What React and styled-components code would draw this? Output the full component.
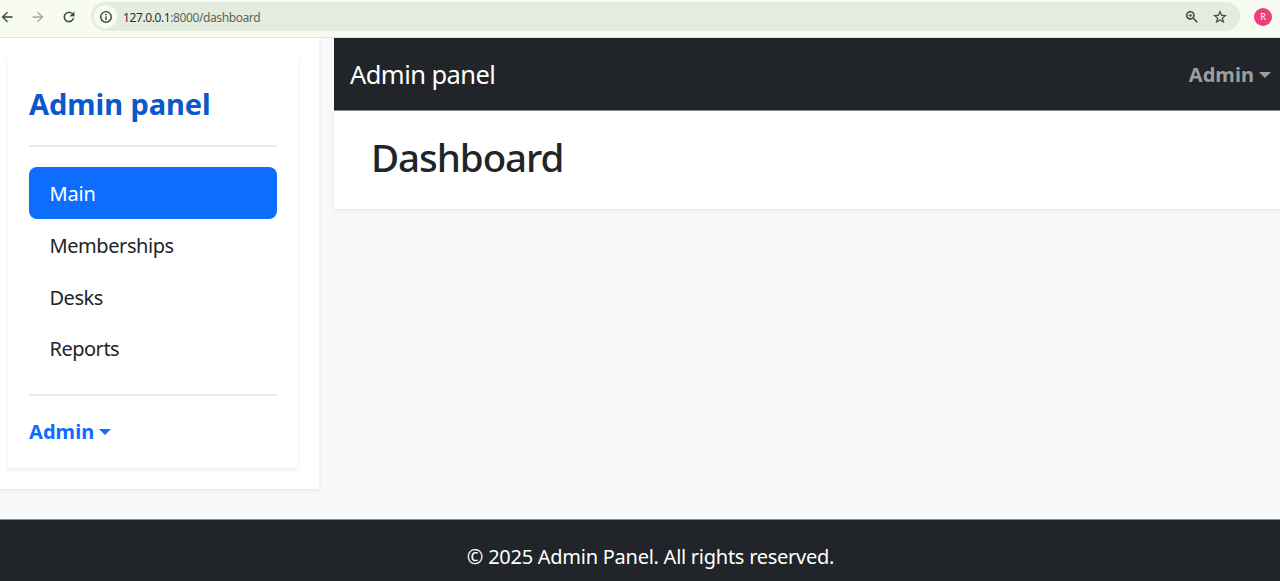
import React from "react";
import styled, { createGlobalStyle } from "styled-components";
import { MdArrowBack, MdArrowForward, MdRefresh, MdInfoOutline, MdZoomIn, MdStarBorder } from "react-icons/md";

const GlobalStyle = createGlobalStyle`
  * { box-sizing: border-box; }
  html, body { margin: 0; overflow: hidden; }
  body {
    background: #f8f9fb;
    color: #212529;
    font-family: "Segoe UI", "Noto Sans", "Open Sans", sans-serif;
  }
`;

const Page = styled.div`
  width: 1280px;
  height: 581px;
  display: flex;
  flex-direction: column;
  overflow: hidden;
`;

const BrowserBar = styled.header`
  flex: none;
  height: 38px;
  display: flex;
  align-items: center;
  padding: 0 8px 4px 0;
  background: #f8fbf2;
  border-bottom: 1px solid #dfe6da;
  svg path[fill="none"] { stroke: none; }
`;

const BrowserControls = styled.div`
  display: flex;
  gap: 15px;
  width: 91px;
  margin-left: -1.5px;
  color: #3f4a3f;
  svg { flex: none; width: 16px; height: 16px; stroke: currentColor; stroke-width: 0.3px; }
  svg:nth-child(2) { color: #a5aca2; }
`;

const AddressBar = styled.div`
  flex: 1;
  height: 29px;
  margin-left: 1.5px;
  border-radius: 15px;
  background: #e3ecdf;
  display: flex;
  align-items: center;
  padding: 0 12px 0 3px;
`;

const SiteInfo = styled.span`
  width: 23px;
  height: 23px;
  border-radius: 50%;
  background: #f8fbf2;
  display: flex;
  align-items: center;
  justify-content: center;
  color: #2c332c;
  svg { stroke: currentColor; stroke-width: 0.3px; }
`;

const Url = styled.span`
  flex: 1;
  margin-left: 6px;
  padding-top: 2px;
  font-size: 12px;
  line-height: 16px;
  letter-spacing: -0.4px;
  color: #5c665b;
  b { font-weight: 400; color: #2a302a; }
`;

const AddressActions = styled.div`
  display: flex;
  gap: 12px;
  color: #3f4a3f;
  svg { stroke: currentColor; stroke-width: 0.3px; }
`;

const Avatar = styled.span`
  width: 18px;
  height: 18px;
  margin-left: 14px;
  border-radius: 50%;
  background: #ec407a;
  color: #fff;
  font-size: 9px;
  line-height: 18px;
  text-align: center;
`;

const Body = styled.div`
  flex: none;
  height: 481px;
  display: flex;
  align-items: flex-start;
`;

const Sidebar = styled.aside`
  width: 319px;
  height: 451px;
  padding: 20px 21px 20px 8px;
  background: #fff;
  box-shadow: 0 2px 5px rgba(0, 0, 0, 0.08);
`;

const SidebarCard = styled.div`
  height: 410px;
  padding: 21px;
  background: #fff;
  box-shadow: 0 2px 5px rgba(0, 0, 0, 0.08);
`;

const SidebarTitle = styled.h2`
  margin: 0;
  height: 66px;
  padding-top: 3px;
  font-size: 29px;
  line-height: 44px;
  font-weight: 700;
  letter-spacing: -0.05px;
  color: #0a58ca;
  white-space: nowrap;
`;

const Divider = styled.hr`
  margin: 0;
  border: 0;
  height: 2px;
  background: #e9eaea;
`;

const NavList = styled.nav`
  margin: 20px 0;
`;

const NavItem = styled.a`
  display: block;
  height: 51.8px;
  padding-left: 20.5px;
  border-radius: 8px;
  font-size: 20px;
  line-height: 53.4px;
  letter-spacing: ${(p) => p.$spacing}px;
  background: ${(p) => (p.$active ? "#0d6efd" : "transparent")};
  color: ${(p) => (p.$active ? "#fff" : "#212529")};
`;

const UserMenu = styled.div`
  display: flex;
  align-items: center;
  gap: 5px;
  font-size: 20px;
  line-height: 32px;
  font-weight: 700;
  letter-spacing: 0.05px;
  color: ${(p) => p.$color};
  &::after {
    content: "";
    border: 6px solid transparent;
    border-top-color: currentColor;
    border-bottom: 0;
    margin-bottom: 1px;
  }
`;

const SidebarUser = styled.div`
  padding-top: 20px;
`;

const Main = styled.main`
  flex: 1;
  margin-left: 15px;
`;

const TopBar = styled.div`
  height: 73px;
  padding: 2px 9px 0 16px;
  display: flex;
  align-items: center;
  justify-content: space-between;
  background: #212529;
  border-bottom: 1px solid #8b8e91;
`;

const Brand = styled.span`
  font-size: 25.5px;
  line-height: 36px;
  padding-bottom: 2px;
  letter-spacing: -0.56px;
  color: #fff;
`;

const PageHeading = styled.section`
  height: 98px;
  padding: 18px 37px;
  background: #fff;
  box-shadow: 0 2px 5px rgba(0, 0, 0, 0.08);
  h1 {
    margin: 0;
    font-size: 38.5px;
    line-height: 57px;
    font-weight: 500;
    letter-spacing: -1.05px;
  }
`;

const Footer = styled.footer`
  flex: 1;
  padding: 21px 0 0 21px;
  background: #212529;
  border-top: 1px solid #8b8e91;
  color: #fff;
  font-size: 20px;
  line-height: 32px;
  letter-spacing: -0.26px;
  text-align: center;
`;

const links = [
  { label: "Main", active: true, spacing: -0.2 },
  { label: "Memberships", spacing: -0.43 },
  { label: "Desks", spacing: -0.5 },
  { label: "Reports", spacing: -0.5 },
];

export default function App() {
  return (
    <Page>
      <GlobalStyle />
      <BrowserBar>
        <BrowserControls>
          <MdArrowBack />
          <MdArrowForward />
          <MdRefresh />
        </BrowserControls>
        <AddressBar>
          <SiteInfo><MdInfoOutline size={14} /></SiteInfo>
          <Url><b>127.0.0.1</b>:8000/dashboard</Url>
          <AddressActions>
            <MdZoomIn size={16} />
            <MdStarBorder size={16} />
          </AddressActions>
        </AddressBar>
        <Avatar>R</Avatar>
      </BrowserBar>
      <Body>
        <Sidebar>
          <SidebarCard>
            <SidebarTitle>Admin panel</SidebarTitle>
            <Divider />
            <NavList>
              {links.map((l) => (
                <NavItem key={l.label} $active={l.active} $spacing={l.spacing}>{l.label}</NavItem>
              ))}
            </NavList>
            <Divider />
            <SidebarUser><UserMenu $color="#0d6efd">Admin</UserMenu></SidebarUser>
          </SidebarCard>
        </Sidebar>
        <Main>
          <TopBar>
            <Brand>Admin panel</Brand>
            <UserMenu $color="#9b9d9f">Admin</UserMenu>
          </TopBar>
          <PageHeading><h1>Dashboard</h1></PageHeading>
        </Main>
      </Body>
      <Footer>© 2025 Admin Panel. All rights reserved.</Footer>
    </Page>
  );
}
